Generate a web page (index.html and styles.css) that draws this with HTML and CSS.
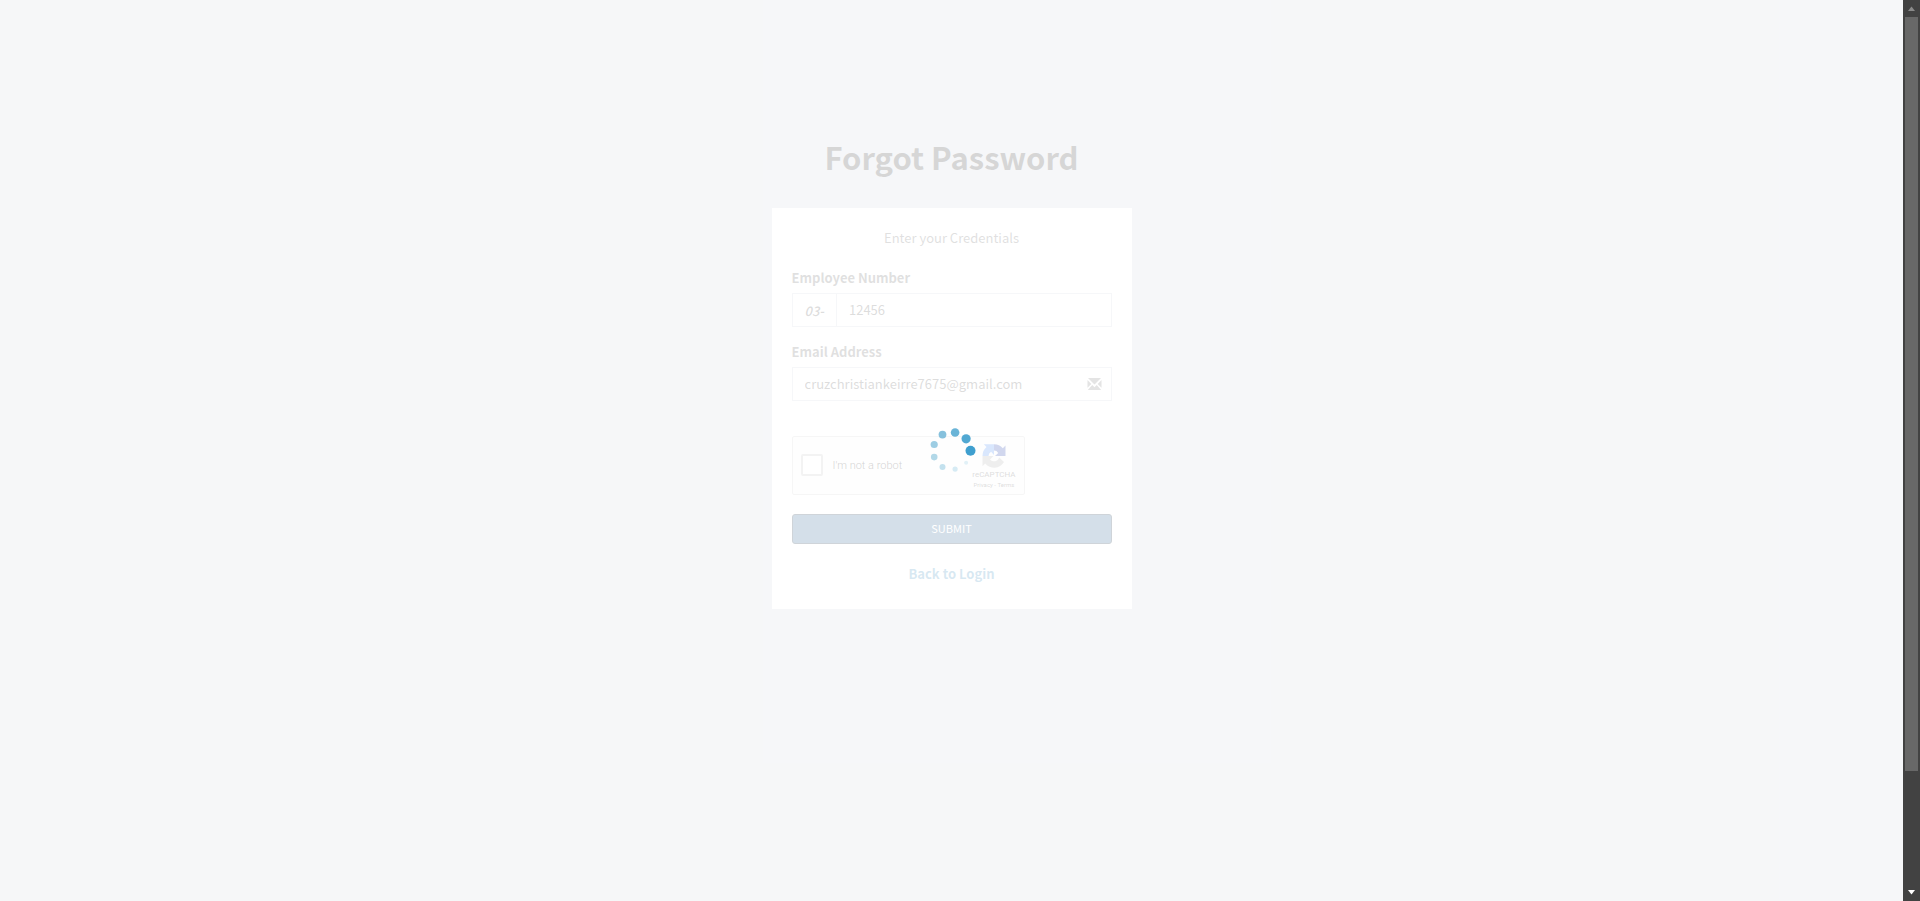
FILE: index.html
```html
<!DOCTYPE html>
<html lang="en">
<head>
<meta charset="utf-8">
<title>Forgot Password</title>
<link rel="stylesheet" href="styles.css">
</head>
<body>
<div class="viewport">
  <div class="page">
    <main class="login-box">
      <h1 class="login-logo">Forgot Password</h1>
      <form class="login-body">
        <p class="login-msg">Enter your Credentials</p>
        <div class="form-group">
          <label class="form-label" for="employee">Employee Number</label>
          <div class="input-row">
            <span class="addon">03-</span>
            <input class="control" id="employee" type="text" value="12456">
          </div>
        </div>
        <div class="form-group">
          <label class="form-label" for="email">Email Address</label>
          <div class="input-row">
            <input class="control control-plain" id="email" type="email" value="cruzchristiankeirre7675@gmail.com">
            <svg class="envelope" viewBox="0 0 14 12" aria-hidden="true">
              <path d="M.5 0h13L7 6.6z M0 2 3.8 6 0 9.8z M14 2 10.2 6 14 9.8z M4.7 7 7 9.2 9.3 7 13.7 12H.3z"/>
            </svg>
          </div>
        </div>
        <div class="captcha-area">
          <div class="captcha">
            <input class="captcha-check" id="robot" type="checkbox">
            <label class="captcha-label" for="robot">I'm not a robot</label>
            <div class="captcha-brand">
              <svg class="captcha-logo" viewBox="0 0 24 24" aria-hidden="true">
                <path fill="#1c3aa9" d="M23.5 12V1.5l-2.7 2.7A11.5 11.5 0 0 0 12 .3v6.2a5 5 0 0 1 4.2 2.4L13 12z"/>
                <path fill="#4285f4" d="M12 .3H1.8l2.7 2.7A11.5 11.5 0 0 0 .5 12h6a5 5 0 0 1 2.6-4.2L12 11z"/>
                <path fill="#ababab" d="M.5 12v10.2l2.7-2.7A11.5 11.5 0 0 0 22 18l-4.8-4.4a5.5 5.5 0 0 1-9.2 2L11.5 12z"/>
              </svg>
              <span class="captcha-name">reCAPTCHA</span>
              <span class="captcha-links"><a href="#">Privacy</a> - <a href="#">Terms</a></span>
            </div>
          </div>
        </div>
        <button class="submit" type="submit">SUBMIT</button>
        <p class="back"><a href="#">Back to Login</a></p>
      </form>
    </main>
    <div class="overlay">
      <svg class="spinner" viewBox="0 0 48 48" role="img" aria-label="Loading">
        <circle cx="42.5" cy="23.7" r="5" fill="#3f9fcf"/>
        <circle cx="38.1" cy="11.8" r="4.6" fill="#51a8d2"/>
        <circle cx="27.1" cy="5.5" r="4.3" fill="#6ab4d7"/>
        <circle cx="14.5" cy="7.6" r="3.9" fill="#86c1dd"/>
        <circle cx="6.2" cy="17.5" r="3.6" fill="#9dcde3"/>
        <circle cx="6.2" cy="30.1" r="3.3" fill="#b2d8e8"/>
        <circle cx="14.5" cy="40" r="3" fill="#c3e1ee"/>
        <circle cx="27.1" cy="42.1" r="2.6" fill="#d6ebf4"/>
        <circle cx="38.1" cy="35.8" r="2" fill="#e2f1f7"/>
      </svg>
    </div>
  </div>
  <div class="scrollbar" aria-hidden="true">
    <svg class="arrow" viewBox="0 0 17 17"><path fill="#8a8a8a" d="M8.5 6.500 12 11H5z"/></svg>
    <div class="track"><div class="thumb"></div></div>
    <svg class="arrow" viewBox="0 0 17 17"><path fill="#fff" d="M5 6h7L8.500 10.500z"/></svg>
  </div>
</div>
</body>
</html>
```
FILE: styles.css
```css
* { box-sizing: border-box; }

body {
  margin: 0;
  background: #d2d6de;
  color: #333;
  font: 13px/20px "Noto Sans CJK SC", "Noto Sans", sans-serif;
}

input, button { font: inherit; }

.viewport {
  display: flex;
  height: 100vh;
}

.page {
  position: relative;
  flex: 1;
  overflow: hidden;
}

.login-box {
  width: 360px;
  margin: 7% auto;
}

.login-logo {
  margin: 0 0 27px;
  font-size: 31px;
  line-height: 48px;
  font-weight: 700;
  text-align: center;
}

.login-body {
  padding: 20px;
  background: #fff;
  color: #666;
}

.login-msg {
  margin: 0;
  padding: 0 20px 20px;
  text-align: center;
}

.form-group { margin-bottom: 15px; }

.form-label {
  display: block;
  margin-bottom: 5px;
  font-weight: 700;
}

.input-row {
  position: relative;
  display: flex;
  height: 34px;
}

.addon {
  padding: 7px 12px 5px;
  border: 1px solid #d2d6de;
  border-right: 0;
  color: #555;
  font-style: italic;
  font-weight: 500;
}

.control {
  flex: 1;
  min-width: 0;
  padding: 6px 12px;
  border: 1px solid #d2d6de;
  border-radius: 0;
  background: #fff;
  color: #555;
}

.control-plain { padding-right: 42px; }

.envelope {
  position: absolute;
  top: 11px;
  right: 10px;
  width: 15px;
  height: 12px;
  fill: #777;
}

.captcha-area {
  height: 78px;
  margin-top: 35px;
}

.captcha {
  display: flex;
  align-items: center;
  width: 233px;
  height: 59px;
  padding: 0 8px 2px;
  border: 1px solid #d3d3d3;
  border-radius: 2px;
  background: #f9f9f9;
  font-family: Roboto, sans-serif;
}

.captcha-check {
  appearance: none;
  width: 22px;
  height: 22px;
  margin: 0;
  border: 2px solid #c1c1c1;
  border-radius: 2px;
  background: #fff;
}

.captcha-label {
  flex: 1;
  margin-left: 10px;
  padding-top: 2px;
  color: #222;
  font-size: 11px;
  font-weight: 300;
}

.captcha-brand {
  display: flex;
  flex-direction: column;
  align-items: center;
  padding-top: 3px;
  color: #555;
}

.captcha-logo {
  width: 24px;
  height: 24px;
}

.captcha-name {
  font-size: 8px;
  line-height: 14px;
}

.captcha-links {
  font-size: 6px;
  line-height: 6px;
}

.captcha-links a {
  color: inherit;
  text-decoration: none;
}

.submit {
  display: block;
  width: 100%;
  height: 30px;
  padding: 0 0 2px;
  border: 1px solid #122b40;
  border-radius: 3px;
  background: #286090;
  color: #fff;
  font-size: 11px;
}

.back {
  margin: 20px 0 5px;
  text-align: center;
}

.back a {
  color: #3c8dbc;
  font-weight: 700;
  text-decoration: none;
}

.overlay {
  position: absolute;
  inset: 0;
  display: flex;
  align-items: center;
  justify-content: center;
  background: rgba(255, 255, 255, 0.8);
}

.spinner {
  width: 48px;
  height: 48px;
}

.scrollbar {
  display: flex;
  flex-direction: column;
  width: 17px;
  background: #424242;
}

.arrow {
  width: 17px;
  height: 17px;
}

.track {
  flex: 1;
  padding: 0 2px;
}

.thumb {
  height: 87%;
  background: #686868;
}
```
